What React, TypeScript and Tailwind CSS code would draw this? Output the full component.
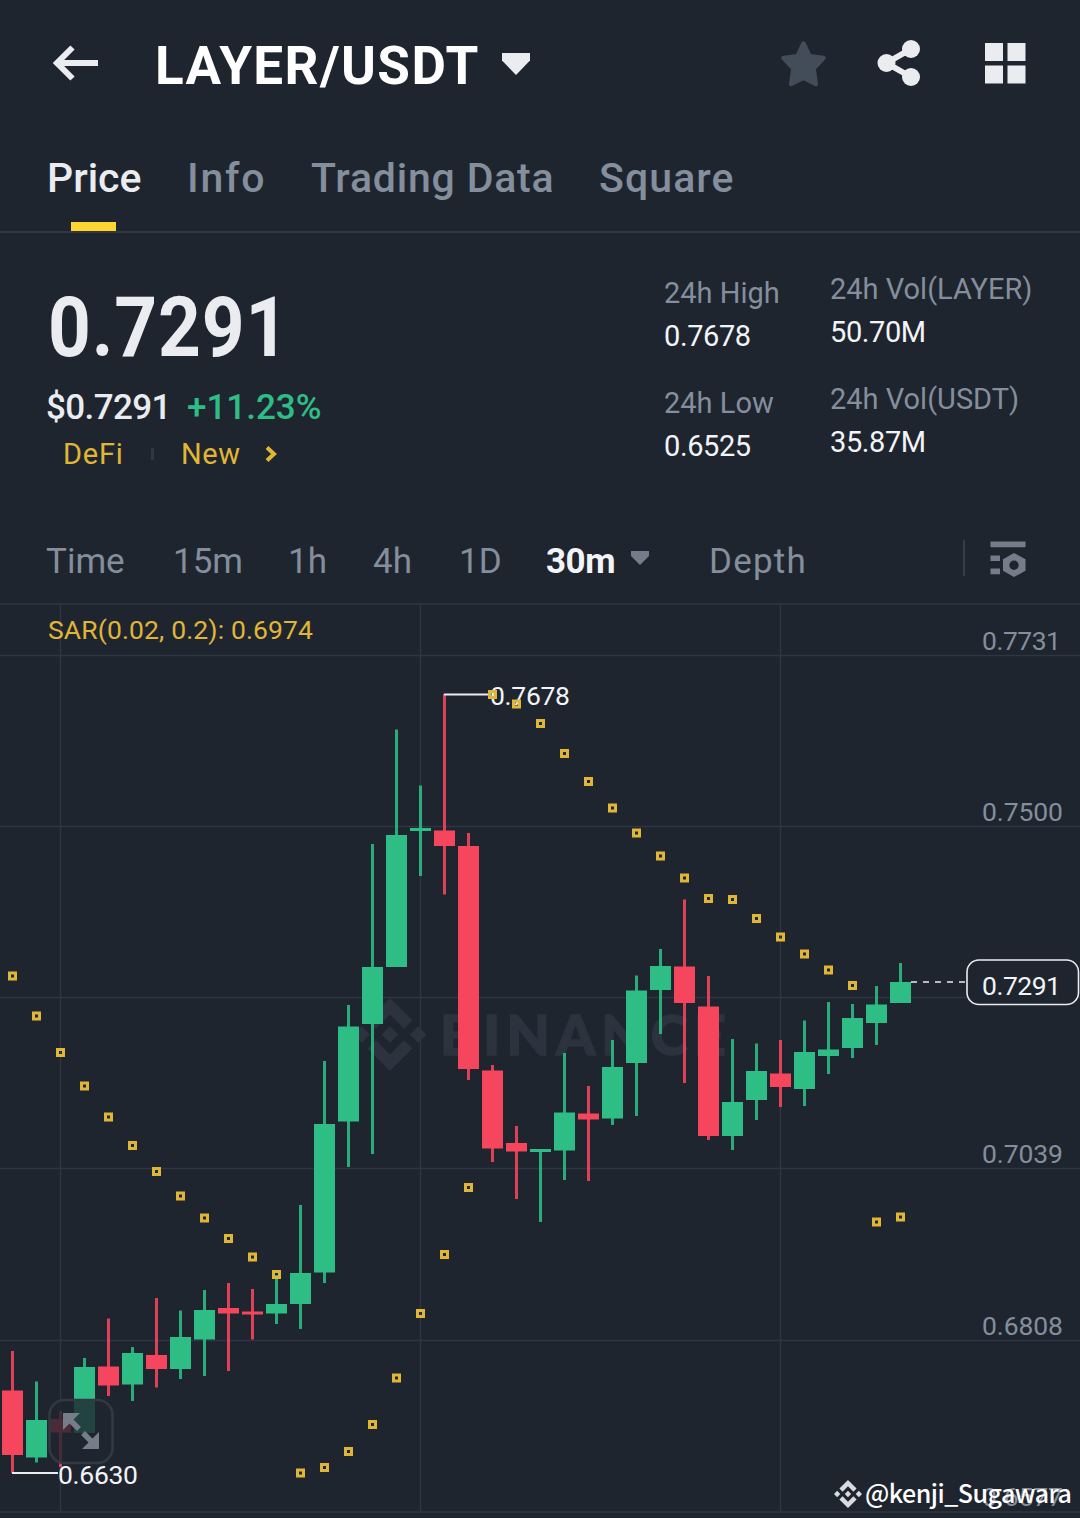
import { SiBinance } from "react-icons/si";

type Candle = [number, number, number, number, number];

const GREEN = "#2ebd85";
const RED = "#f6465d";
const GOLD = "#e0b636";

// up, wick top, body top, body bottom, wick bottom
const candles: Candle[] = [
  [0, 1351, 1390.5, 1455, 1473],
  [1, 1381.5, 1420, 1457.5, 1462.5],
  [0, 1411, 1419, 1432.5, 1467],
  [1, 1358, 1367, 1433, 1434],
  [0, 1318.5, 1366.5, 1385.5, 1396],
  [1, 1347, 1353, 1384.5, 1401],
  [0, 1298, 1355, 1369, 1387.5],
  [1, 1310.5, 1337, 1369, 1379],
  [1, 1290, 1310, 1339.5, 1376],
  [0, 1283, 1308, 1313.5, 1371],
  [0, 1289, 1311.5, 1314.5, 1339.5],
  [1, 1275, 1304, 1313.5, 1324],
  [1, 1205, 1273, 1304, 1329],
  [1, 1061, 1124, 1272.5, 1283],
  [1, 1005, 1026.5, 1121.5, 1167],
  [1, 844, 967, 1024, 1154],
  [1, 729.5, 835, 967, 967],
  [1, 785.5, 828, 831, 876],
  [0, 694, 830.5, 846, 894.5],
  [0, 833, 846, 1069, 1080],
  [0, 1065, 1070.5, 1148.5, 1162],
  [0, 1126, 1143, 1151.5, 1199],
  [1, 1149, 1149, 1152, 1222],
  [1, 1053, 1112.5, 1150.5, 1180],
  [0, 1086, 1113.5, 1119.5, 1181],
  [1, 1040, 1067, 1118.5, 1125],
  [1, 975.5, 990.5, 1063, 1116],
  [1, 949, 966, 990, 1034],
  [0, 899.5, 966.5, 1003, 1083],
  [0, 976, 1006.5, 1136, 1140],
  [1, 1039, 1102, 1136, 1150],
  [1, 1043.5, 1071, 1100, 1120],
  [0, 1040, 1073.5, 1087, 1107],
  [1, 1020.5, 1052, 1089, 1106],
  [1, 1002, 1049.5, 1056, 1074],
  [1, 1004, 1018, 1048, 1058],
  [1, 986, 1004.5, 1023, 1045],
  [1, 963, 982, 1003, 1003],
];

const sar = [
  976, 1016, 1052.5, 1086, 1117, 1145.5, 1171.5, 1196, 1218, 1238.5, 1257,
  1274.5, 1473, 1467.5, 1451.5, 1424.5, 1378, 1313.5, 1254.5, 1187.5, 694.5,
  704, 723.5, 753.5, 781.5, 808, 833, 856, 878, 898.5, 899.5, 918.5, 937, 954,
  970, 985.5, 1222, 1217,
];

const axis = [
  { label: "0.7731", y: 649.5, w: 79 },
  { label: "0.7500", y: 820.5, w: 81 },
  { label: "0.7039", y: 1162.5, w: 81 },
  { label: "0.6808", y: 1334.5, w: 81 },
  { label: "0.6577", y: 1505.5, w: 81 },
];

const Header = () => (
  <header className="flex h-32 items-center pl-[52px] pr-[54px]">
    <svg className="h-9 w-[46px] -mt-0.5" viewBox="0 0 46 36" fill="none">
      <path d="M20.500 2.500 5 18l15.500 15.500M4 18h42" stroke="#eaecef" strokeWidth="6" />
    </svg>
    <h1 className="ml-[57px] mt-1 w-[348px] whitespace-nowrap text-[53px] font-bold leading-none tracking-[1.400px] text-white">
      LAYER/USDT
    </h1>
    <svg className="-ml-[1px] h-[22px] w-7" viewBox="0 0 28 22">
      <path d="M0 0h28v7.500L14 22 0 7.500z" fill="#eaecef" />
    </svg>
    <div className="ml-auto flex items-center">
      <svg className="h-[46px] w-[45px]" viewBox="0 0 45 46">
        <path
          d="M22.500 2.500 28.500 15.200 42.500 17 32.600 27.500 34.800 43 22.500 36.800 10.200 43 12.400 27.500 2.500 17 16.500 15.200z"
          fill="#434c59"
          stroke="#434c59"
          strokeWidth="4.500"
          strokeLinejoin="round"
        />
      </svg>
      <svg className="ml-[51.5px] h-[46px] w-11 -mt-0.5" viewBox="0 0 44 46">
        <g fill="#eaecef">
          <circle cx="9.500" cy="23" r="9" />
          <circle cx="34" cy="9" r="9" />
          <circle cx="34" cy="37" r="9" />
        </g>
        <path d="M34 9 9.500 23 34 37" stroke="#eaecef" strokeWidth="6" fill="none" />
      </svg>
      <svg className="ml-16 h-[41px] w-[41px] -mt-0.5" viewBox="0 0 41 41" fill="#eaecef">
        <path d="M0 0h18v18H0zM22.500 0h18v18h-18zM0 22.500h18v18H0zM22.500 22.500h18v18h-18z" />
      </svg>
    </div>
  </header>
);

const Tabs = () => (
  <nav className="flex h-[105px] border-b-2 border-[#313842] pl-[47px] pt-[30px] text-[41px] font-medium leading-none text-[#848e9c]">
    <div className="relative w-[140px] text-[#eaecef]">
      Price
      <span className="absolute bottom-0 left-6 h-[9px] w-[45px] bg-[#fcd535]" />
    </div>
    <div className="w-[124px] tracking-[1.800px]">Info</div>
    <div className="w-[288px] whitespace-nowrap tracking-[0.800px]">Trading Data</div>
    <div className="tracking-[1.100px]">Square</div>
  </nav>
);

const Stat = ({ label, value }: { label: string; value: string }) => (
  <div className="flex h-[110px] flex-col gap-3.5 whitespace-nowrap text-[29px] leading-none">
    <span className="text-[#848e9c]">{label}</span>
    <span className="tracking-[-0.400px] text-[#f3f4f7]">{value}</span>
  </div>
);

const Summary = () => (
  <section className="flex h-[285px] pl-[46px]">
    <div className="w-[618px] pt-[53px]">
      <p className="ml-0.5 origin-left scale-x-90 text-[83px] font-bold leading-none tracking-[1px] text-[#eaecef]">
        0.7291
      </p>
      <p className="mt-[21px] flex text-[35px] font-medium leading-none">
        <span className="w-[141px] tracking-[-0.600px] text-[#eaecef]">$0.7291</span>
        <span className="text-[#2ebd85]">+11.23%</span>
      </p>
      <div className="mt-[15px] flex items-center pl-[17px] text-[29px] leading-none text-[#e0b636]">
        <span className="w-[88px] tracking-[0.800px]">DeFi</span>
        <span className="-mt-0.5 h-3 w-[3px] bg-[#313842]" />
        <span className="ml-[27px] w-[84px] tracking-[0.600px]">New</span>
        <svg className="-mt-0.5 h-4 w-3" viewBox="0 0 12 16" fill="none">
          <path d="m2 1.500 7 6.500-7 6.500" stroke="#e0b636" strokeWidth="4" />
        </svg>
      </div>
    </div>
    <div className="w-[166px] pt-[46px]">
      <Stat label="24h High" value="0.7678" />
      <Stat label="24h Low" value="0.6525" />
    </div>
    <div className="pt-[42px]">
      <Stat label="24h Vol(LAYER)" value="50.70M" />
      <Stat label="24h Vol(USDT)" value="35.87M" />
    </div>
  </section>
);

const Intervals = () => (
  <div className="flex h-[87px] border-b-2 border-[#2b313b] pl-[46px] pt-[25px] text-[35px] leading-none text-[#848e9c]">
    <span className="mt-px w-[127px]">Time</span>
    <span className="mt-px w-[115px]">15m</span>
    <span className="mt-px w-[85px]">1h</span>
    <span className="mt-px w-[86px]">4h</span>
    <span className="mt-px w-[87px]">1D</span>
    <span className="mt-px w-[85px] font-bold tracking-[-0.500px] text-[#f3f4f7]">30m</span>
    <svg className="mt-2 h-3.5 w-[18px]" viewBox="0 0 18 14">
      <path d="M0 0h18v5L9 14 0 5z" fill="#757d8a" />
    </svg>
    <span className="ml-[60px] mt-px w-[254px] tracking-[1.200px]">Depth</span>
    <span className="-mt-[3px] h-9 w-0.5 bg-[#363d49]" />
    <svg className="-mt-0.5 ml-[25px] h-9 w-9" viewBox="0 0 36 36" fill="#757d8a">
      <path d="M.500 .500h35v5.700h-35zM.500 14.500h9.500v5.500H.500zM.500 27.500h9.500v5.700H.500z" />
      <path
        fillRule="evenodd"
        d="m24 12 11.500 6.200v11.600L24 36l-11-6.200V18.200zM24 19.500a4.700 4.700 0 1 0 0 9.400 4.700 4.700 0 0 0 0-9.400z"
      />
    </svg>
  </div>
);

const Chart = () => (
  <svg className="block h-[913px] w-[1080px]" viewBox="0 605 1080 913" fontSize="26.500">
    <g stroke="#2f3641" strokeWidth="1.500">
      {[655.5, 826.5, 997.5, 1168.5, 1340.5, 1512].map((y) => (
        <path key={y} d={`M0 ${y}H1080`} />
      ))}
      {[60.5, 420.5, 780.5].map((x) => (
        <path key={x} d={`M${x} 605V1512`} />
      ))}
    </g>

    <SiBinance x="353.500" y="998" size={73} color="#2d333e" />
    <text
      x="440"
      y="1054.500"
      textLength="286"
      fill="#2d333e"
      stroke="#2d333e"
      strokeWidth="1.500"
      className="font-[Lato] text-[56px] font-black"
    >
      BINANCE
    </text>

    <g fill="#848e9c">
      {axis.map((a) => (
        <text key={a.label} x="982" y={a.y} textLength={a.w}>
          {a.label}
        </text>
      ))}
    </g>
    <text x="48" y="638.500" textLength="265" fill="#e0b636">
      SAR(0.02, 0.2): 0.6974
    </text>

    {candles.map(([up, high, top, bottom, low], i) => (
      <g key={i} fill={up ? GREEN : RED}>
        <rect x={11 + i * 24} y={high} width="3" height={low - high} opacity="0.88" />
        <rect x={2 + i * 24} y={top} width="21" height={bottom - top} />
      </g>
    ))}

    {/* high / low markers */}
    <path d="M444 694.500H490M12 1473H58" stroke="#eaecef" strokeWidth="1.800" />
    <g fill="#f3f4f7">
      <text x="490" y="704.500" textLength="80">
        0.7678
      </text>
      <text x="58" y="1483.500" textLength="80">
        0.6630
      </text>
    </g>

    {sar.map((y, i) => (
      <rect
        key={i}
        x={9.5 + i * 24}
        y={y - 3}
        width="6"
        height="6"
        fill="none"
        stroke={GOLD}
        strokeWidth="3"
      />
    ))}

    {/* last price */}
    <path d="M911 982H966" stroke="#eaecef" strokeWidth="1.600" strokeDasharray="6 6" />
    <rect x="967" y="960" width="111.500" height="44.500" rx="12" fill="#1f252f" stroke="#eaecef" strokeWidth="1.600" />
    <text x="982" y="994.500" textLength="79" fill="#f3f4f7">
      0.7291
    </text>

    {/* expand button */}
    <rect x="49.500" y="1400" width="63" height="63" rx="15" fill="#1f252f" fillOpacity="0.8" stroke="#323943" strokeWidth="2.600" />
    <g fill="#757d8a" stroke="#757d8a">
      <path d="M63 1413h17l-17 17zM99 1449v-17l-17 17z" stroke="none" />
      <path d="m68 1418 11 11M94 1444l-11-11" strokeWidth="5.500" />
    </g>

    <SiBinance x="834" y="1480" size={28} color="#d9dbe0" />
    <text
      x="865"
      y="1503"
      textLength="207"
      fill="#ffffff"
      className="font-['Noto_Sans_CJK_SC',sans-serif] text-[25px] font-medium"
    >
      @kenji_Sugawara
    </text>
  </svg>
);

export default function App() {
  return (
    <main className="h-[1518px] w-[1080px] overflow-hidden bg-[#1f252f] font-[Roboto,sans-serif]">
      <Header />
      <Tabs />
      <Summary />
      <Intervals />
      <Chart />
    </main>
  );
}
